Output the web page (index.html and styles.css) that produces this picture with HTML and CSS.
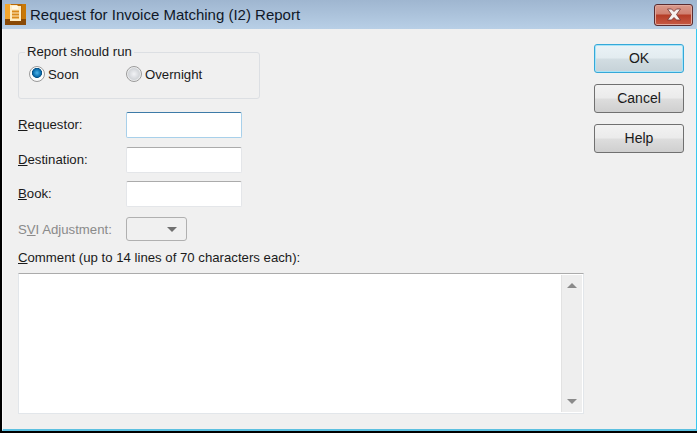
FILE: index.html
```html
<!DOCTYPE html>
<html lang="en">
<head>
    <meta charset="UTF-8">
    <meta name="viewport" content="width=device-width, initial-scale=1.0">
    <title>Request for Invoice Matching (I2) Report</title>
    <link rel="stylesheet" href="styles.css">
</head>
<body>
    <div class="window">
        <div class="titlebar">
            <svg class="app-icon" width="21" height="21" viewBox="0 0 21 21">
                <rect width="21" height="21" fill="#b86a08"/>
                <rect width="6" height="15" fill="#f2a62c"/>
                <rect x="17" width="4" height="16" fill="#c87808"/>
                <rect y="15" width="21" height="6" fill="#8a4a06"/>
                <path d="M5 1h7l1 1h3v15H5z" fill="#ffedc4"/>
                <path d="M7 2h6v3H7z" fill="#fff8e6"/>
                <path d="M7 7.5h7M7 10.5h7M7 13.5h7" stroke="#d98a1c" stroke-width="2"/>
            </svg>
            <span class="title-text">Request for Invoice Matching (I2) Report</span>
            <button type="button" class="close-button">
                <svg width="18" height="14" viewBox="0 0 18 14">
                    <path d="M2.5 1h4L9 3.5 11.5 1h4l-4 5.5 4 5.5h-4L9 9.5 6.5 12h-4l4-5.5z" fill="#f6f0ee" stroke="#6e3030" stroke-width="0.8" stroke-linejoin="round"/>
                </svg>
            </button>
        </div>

        <div class="content">
            <div class="form-column">
                <fieldset class="run-group">
                    <legend>Report should run</legend>
                    <div class="radio-row">
                        <label class="radio radio-soon"><span class="radio-dot checked"></span>Soon</label>
                        <label class="radio"><span class="radio-dot"></span>Overnight</label>
                    </div>
                </fieldset>

                <div class="form-group first-group">
                    <label class="field-label" for="requestor"><u>R</u>equestor:</label>
                    <input type="text" id="requestor" class="text-box focused">
                </div>
                <div class="form-group destination-group">
                    <label class="field-label" for="destination"><u>D</u>estination:</label>
                    <input type="text" id="destination" class="text-box">
                </div>
                <div class="form-group">
                    <label class="field-label" for="book"><u>B</u>ook:</label>
                    <input type="text" id="book" class="text-box">
                </div>
                <div class="form-group svi-group">
                    <span class="field-label disabled">S<u>V</u>I Adjustment:</span>
                    <div class="combo"><span class="combo-arrow"></span></div>
                </div>

                <label class="comment-label"><u>C</u>omment (up to 14 lines of 70 characters each):</label>
                <div class="comment-box">
                    <div class="comment-text"></div>
                    <div class="scrollbar">
                        <span class="arrow-up"></span>
                        <span class="arrow-down"></span>
                    </div>
                </div>
            </div>

            <div class="button-column">
                <button type="button" class="dialog-button default-button">OK</button>
                <button type="button" class="dialog-button">Cancel</button>
                <button type="button" class="dialog-button">Help</button>
            </div>
        </div>
    </div>
</body>
</html>
```

FILE: styles.css
```css
html, body {
    margin: 0;
    padding: 0;
    background: #000;
}

.window {
    width: 697px;
    height: 433px;
    box-sizing: border-box;
    display: flex;
    flex-direction: column;
    border-left: 2px solid #000;
    border-bottom: 2px solid #000;
    font-family: "Liberation Sans", Arial, sans-serif;
    font-size: 13.2px;
    color: #1a1a1a;
    background: #f0f0f0;
    overflow: hidden;
}

.titlebar {
    height: 29px;
    flex: none;
    display: flex;
    align-items: center;
    background: linear-gradient(#9fb6d0, #b8cfe6);
    padding-left: 3px;
}

.app-icon {
    flex: none;
}

.title-text {
    margin-left: 4px;
    font-size: 15px;
    color: #101828;
}

.close-button {
    align-self: flex-start;
    margin: 4px 4px 0 auto;
    width: 39px;
    height: 22px;
    padding: 0;
    display: flex;
    align-items: center;
    justify-content: center;
    border: 1px solid #5a2c30;
    border-radius: 3px;
    box-shadow: inset 0 0 0 1px #e0a89c;
    background: linear-gradient(#d99a8c 0, #d08070 45%, #b53c26 50%, #c65a44 100%);
}

.content {
    flex: 1;
    display: flex;
    border-left: 1px solid #fafafa;
    border-right: 1px solid #35c8f0;
    border-bottom: 2px solid #5cc0e0;
}

.form-column {
    width: 566px;
    margin-left: 15px;
    flex: none;
}

.run-group {
    width: 242px;
    height: 54px;
    box-sizing: border-box;
    margin: 16px 0 0;
    padding: 0 0 0 10px;
    border: 1px solid #dcdfe3;
    border-radius: 3px;
}

.run-group legend {
    padding: 0 2px;
    margin-left: -4px;
    line-height: 14px;
}

.radio-row {
    display: flex;
    margin-top: 7px;
}

.radio {
    display: flex;
    align-items: center;
    gap: 3px;
}

.radio-soon {
    width: 97px;
}

.radio-dot {
    width: 14px;
    height: 14px;
    border: 1px solid #9a9a9a;
    border-radius: 50%;
    background: radial-gradient(circle, #f2f3f6 0, #d2d5d9 55%, #f8f8f8 72%);
}

.radio-dot.checked {
    background: radial-gradient(circle at 50% 42%, #4cb4ea 0, #0a6cac 36%, #084f80 44%, #ffffff 50%, #f4f4f4 100%);
}

.form-group {
    display: flex;
    align-items: center;
    height: 26px;
    margin-top: 8px;
}

.first-group {
    margin-top: 13px;
}

.destination-group {
    margin-top: 9px;
}

.field-label {
    width: 108px;
    flex: none;
    padding-bottom: 2px;
}

.disabled {
    color: #8a8a8a;
}

.text-box {
    width: 116px;
    height: 26px;
    box-sizing: border-box;
    padding: 0;
    background: #fff;
    border: 1px solid #e4e6e9;
    border-top-color: #ababab;
    border-radius: 2px;
    outline: none;
}

.text-box.focused {
    border-color: #a8d0ea;
    border-top-color: #3d7ba8;
}

.svi-group {
    height: 24px;
    margin-top: 10px;
}

.svi-group .field-label {
    padding-bottom: 0;
}

.combo {
    width: 61px;
    height: 24px;
    box-sizing: border-box;
    display: flex;
    align-items: center;
    justify-content: flex-end;
    padding-right: 9px;
    border: 1px solid #b0b0b0;
    border-radius: 3px;
    background: #f0f0f0;
}

.combo-arrow {
    width: 0;
    height: 0;
    border-left: 5px solid transparent;
    border-right: 5px solid transparent;
    border-top: 5px solid #707070;
}

.comment-label {
    display: block;
    margin-top: 9px;
    line-height: 15px;
}

.comment-box {
    display: flex;
    width: 566px;
    height: 141px;
    box-sizing: border-box;
    margin-top: 8px;
    background: #fff;
    border: 1px solid #e2e6ea;
    border-top-color: #ababab;
}

.comment-text {
    flex: 1;
}

.scrollbar {
    width: 21px;
    margin: 1px 1px 1px 0;
    display: flex;
    flex-direction: column;
    justify-content: space-between;
    align-items: center;
    padding: 8px 0 8px;
    box-sizing: border-box;
    background: #eeeeee;
    border-left: 1px solid #e2e2e2;
}

.arrow-up,
.arrow-down {
    width: 0;
    height: 0;
    border-left: 5px solid transparent;
    border-right: 5px solid transparent;
}

.arrow-up {
    border-bottom: 5px solid #8a8a8a;
}

.arrow-down {
    border-top: 5px solid #8a8a8a;
}

.button-column {
    margin-left: 10px;
    padding-top: 15px;
    display: flex;
    flex-direction: column;
    gap: 11px;
}

.dialog-button {
    width: 90px;
    height: 29px;
    padding: 0 0 2px;
    font-family: inherit;
    font-size: 14px;
    color: #1a1a1a;
    border: 1px solid #707070;
    border-radius: 3px;
    background: linear-gradient(#f2f2f2 0, #ebebeb 48%, #dddddd 52%, #cfcfcf 100%);
}

.default-button {
    border-color: #35a8d8;
    box-shadow: inset 0 0 0 1px #a8e4f8;
    background: linear-gradient(#eaf2f6 0, #e3ecf0 48%, #d2dde2 52%, #c6d2d8 100%);
}
```
